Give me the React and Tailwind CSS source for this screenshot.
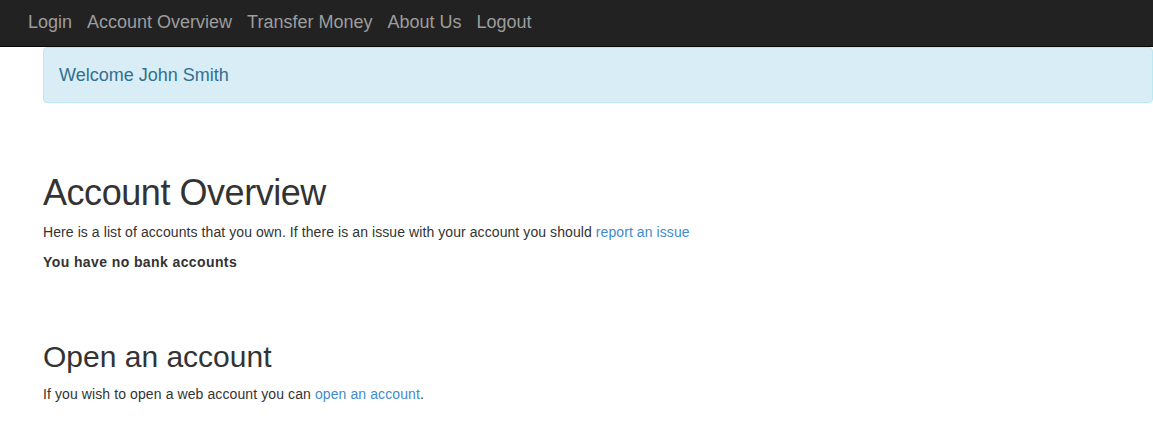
import React from 'react';

export default function App() {
  const links = ['Login', 'Account Overview', 'Transfer Money', 'About Us', 'Logout'];

  return (
    <div className="min-h-screen bg-white font-['Liberation_Sans',Arial,sans-serif] text-[14px] leading-[20px] text-[#333]">
      {/* Top navbar */}
      <nav className="h-[47px] pb-[2px] bg-[#222] border-b border-[#080808] flex items-center pl-[28px] gap-[15px]">
        {links.map((l) => (
          <a key={l} href="#" className="text-[18px] text-[#9d9d9d] hover:text-white">
            {l}
          </a>
        ))}
      </nav>

      <div className="pl-[43px]">
        {/* Welcome alert */}
        <div className="h-[56px] flex items-center px-[15px] border border-[#bce8f1] bg-[#d9edf7] rounded-[4px] text-[18px] text-[#31708f]">
          Welcome John Smith
        </div>

        {/* Account overview */}
        <h1 className="mt-[70px] mb-[9px] text-[36px] leading-[39.6px] font-normal tracking-[-0.45px]">Account Overview</h1>
        <p className="mb-[10px] tracking-[0.08px]">
          Here is a list of accounts that you own. If there is an issue with your account you should{' '}
          <a href="#" className="text-[#428bca]">report an issue</a>
        </p>
        <p className="font-bold tracking-[0.4px]">You have no bank accounts</p>

        {/* Open an account */}
        <h2 className="mt-[68px] mb-[11px] text-[30px] leading-[33px] font-normal">Open an account</h2>
        <p className="tracking-[0.1px]">
          If you wish to open a web account you can{' '}
          <a href="#" className="text-[#428bca]">open an account</a>.
        </p>
      </div>
    </div>
  );
}
